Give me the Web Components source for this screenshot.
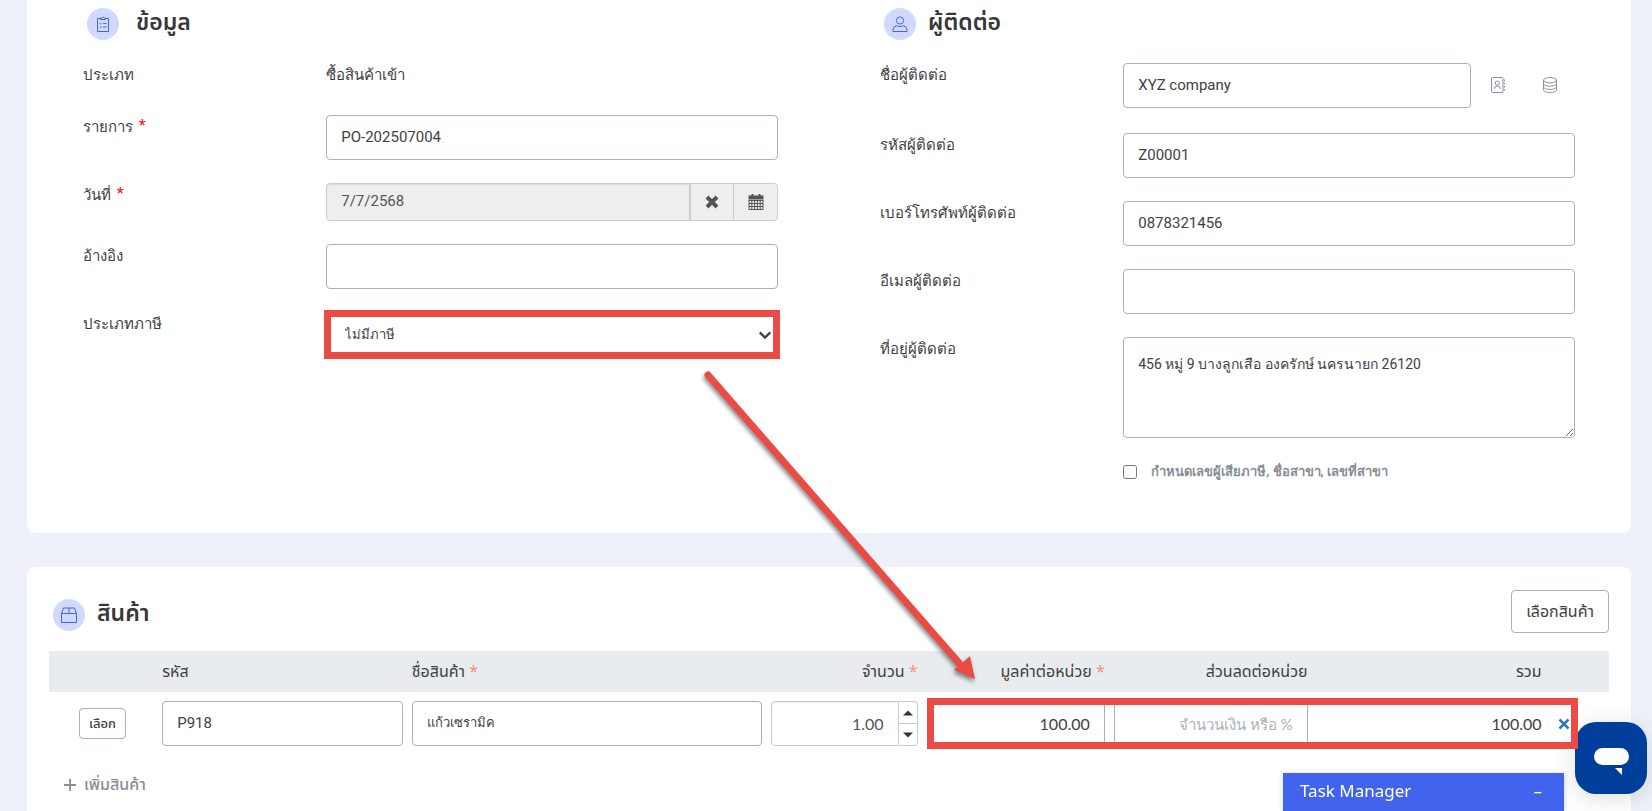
<!DOCTYPE html>
<html lang="th">
<head>
<meta charset="utf-8">
<title>ซื้อสินค้าเข้า</title>
<style>
    * { box-sizing: border-box; }
    body {
        --border: #a9b1bb;
        --ink: #414141;
        --muted: #868e96;
        --heading-font: "Noto Sans Thai", "Noto Sans", sans-serif;
        --number-font: Lato, "Noto Sans", sans-serif;
        margin: 0;
        padding: 0 21px 0 27px;
        min-height: 100vh;
        display: flex;
        flex-direction: column;
        gap: 34px;
        position: relative;
        overflow-x: hidden;
        background: #eef1fa;
        color: var(--ink);
        font: 15px/22px Roboto, "Noto Sans", sans-serif;
    }
</style>
</head>
<body>
<c-card>
    <c-columns>
        <c-section>
            <c-section-title icon="clipboard" wide>ข้อมูล</c-section-title>
            <c-static-field label="ประเภท">ซื้อสินค้าเข้า</c-static-field>
            <c-text-field label="รายการ" value="PO-202507004" required></c-text-field>
            <c-date-field label="วันที่" value="7/7/2568" required></c-date-field>
            <c-text-field label="อ้างอิง"></c-text-field>
            <c-select-field label="ประเภทภาษี" value="ไม่มีภาษี"></c-select-field>
        </c-section>
        <c-section>
            <c-section-title icon="person">ผู้ติดต่อ</c-section-title>
            <c-text-field label="ชื่อผู้ติดต่อ" value="XYZ company"><c-lookup slot="tools"></c-lookup></c-text-field>
            <c-text-field label="รหัสผู้ติดต่อ" value="Z00001"></c-text-field>
            <c-text-field label="เบอร์โทรศัพท์ผู้ติดต่อ" value="0878321456"></c-text-field>
            <c-text-field label="อีเมลผู้ติดต่อ"></c-text-field>
            <c-text-field label="ที่อยู่ผู้ติดต่อ" value="456 หมู่ 9 บางลูกเสือ องครักษ์ นครนายก 26120" multiline></c-text-field>
            <c-check-field label="กำหนดเลขผู้เสียภาษี, ชื่อสาขา, เลขที่สาขา"></c-check-field>
        </c-section>
    </c-columns>
</c-card>
<c-card last>
    <c-products></c-products>
</c-card>
<c-chat></c-chat>
<c-task-manager>Task Manager</c-task-manager>
<c-arrow></c-arrow>

<script>
const ICONS = {
    clipboard: `<path d="M5.5 2.5h-3v13h11v-13h-3M5.5 3.500V2h1.300a1.300 1.300 0 0 1 2.400 0h1.300v1.500z"/><path d="M4.500 7.500l.8.800 1.200-1.500M8 7.500h3.500M4.500 11l.8.800 1.200-1.500M8 11h3.500" stroke-width=".9"/>`,
    person: `<circle cx="8" cy="4.500" r="3.600"/><path d="M1 15.500v-2a4 4 0 0 1 3.500-3.700c1 .1 1.800.7 3.500.7s2.500-.6 3.500-.7a4 4 0 0 1 3.500 3.700v2z"/>`,
    box: `<path d="M.5 6.500h15v9H.5zM.5 6.500l2-5.500h11l2 5.500M8 1v5.500"/>`,
    contact: `<rect x="1.500" y=".5" width="11.500" height="15" rx="1"/><circle cx="7.300" cy="6" r="2"/><path d="M4.500 12v-.7a2 2 0 0 1 2-2h1.600a2 2 0 0 1 2 2v.7M14.500 2.500v2M14.500 6v1.500M14.500 9v1.500M14.500 12v1.500"/>`,
    database: `<ellipse cx="8" cy="3.200" rx="6.500" ry="2.700"/><path d="M1.500 3.200v9.600c0 1.500 2.900 2.700 6.500 2.700s6.500-1.200 6.500-2.700V3.200M1.500 6.500C1.500 8 4.400 9.200 8 9.200s6.500-1.200 6.500-2.700M1.500 9.700c0 1.500 2.900 2.700 6.500 2.700s6.500-1.200 6.500-2.700"/>`,
    cross: `<path d="M3 3l10 10M13 3L3 13" stroke-width="4"/>`,
    calendar: `<path d="M.5 1.500h3V0h2v1.500h5V0h2v1.500h3v4H.5z" fill="currentColor" stroke="none"/><path d="M1 6v9.500h14V6M1 6.500h14M1 9.500h14M1 12.500h14M3.800 6v9M6.600 6v9M9.400 6v9M12.200 6v9"/>`,
    chevron: `<path d="M2 5l6 6 6-6" stroke-width="2.500"/>`,
    remove: `<path d="M3.500 3.500l9 9M12.500 3.500l-9 9" stroke-width="2.500"/>`,
    plus: `<path d="M8 2v12M2 8h12" stroke-width="1.800"/>`,
    up: `<path d="M3 10.500l5-5 5 5z" fill="currentColor" stroke="none"/>`,
    down: `<path d="M3 5.500l5 5 5-5z" fill="currentColor" stroke="none"/>`
};

const icon = (name, size = 16) => `<svg width="${size}" height="${size}" viewBox="0 0 16 16" fill="none" stroke="currentColor" aria-hidden="true">${ICONS[name]}</svg>`;

const baseStyle = `
    * { box-sizing: border-box; }
    :host { display: block; }
    svg { display: block; }
    button { font: inherit; color: inherit; cursor: pointer; }
    input, select, textarea { font: inherit; color: inherit; margin: 0; }
`;

const controlStyle = `
    .control {
        display: block;
        width: 100%;
        min-width: 0;
        height: 45px;
        padding: 0 14px 2px;
        border: 1px solid var(--border);
        border-radius: 4px;
        background: #fff;
    }
`;

class BaseElement extends HTMLElement {
    constructor() {
        super();
        this.attachShadow({ mode: 'open' });
    }

    connectedCallback() {
        this.shadowRoot.innerHTML = `<style>${baseStyle}</style>${this.template()}`;
    }
}

class CardComponent extends BaseElement {
    template() {
        return `
        <style>
            :host { background: #fff; border-radius: 0 0 8px 8px; padding: 8px 56px 50px; }
            :host([last]) { flex: 1; border-radius: 8px 8px 0 0; padding: 23px 22px 0; }
        </style>
        <slot></slot>
        `;
    }
}

class ColumnsComponent extends BaseElement {
    template() {
        return `
        <style>
            :host { display: grid; grid-template-columns: 1fr 1fr; gap: 102px; align-items: start; }
        </style>
        <slot></slot>
        `;
    }
}

class SectionComponent extends BaseElement {
    template() {
        return `
        <style>
            :host { display: flex; flex-direction: column; gap: 23px; }
        </style>
        <slot></slot>
        `;
    }
}

class SectionTitleComponent extends BaseElement {
    template() {
        return `
        <style>
            :host { display: flex; gap: 12px; padding-left: 4px; }
            :host([wide]) { gap: 17px; }
            .badge {
                display: grid;
                place-items: center;
                width: 32px;
                height: 32px;
                border-radius: 50%;
                background: #d0d9ff;
                color: #4263eb;
            }
            h2 { margin: 0; font: 600 23px/30px var(--heading-font); color: #373737; }
        </style>
        <span class="badge">${icon(this.getAttribute('icon'))}</span>
        <h2><slot></slot></h2>
        `;
    }
}

// Base of every label + control row
class FieldComponent extends BaseElement {
    get value() {
        return this.getAttribute('value') || '';
    }

    control() {
        return '<slot></slot>';
    }

    template() {
        const star = this.hasAttribute('required') ? ' <span class="star">*</span>' : '';
        return `
        <style>
            ${controlStyle}
            :host { display: grid; grid-template-columns: 35% 65%; align-items: start; }
            label { line-height: 24px; }
            .star { color: #f00; font: 18px/16px "Liberation Sans", sans-serif; margin-left: 2px; }
        </style>
        <label for="control">${this.getAttribute('label')}${star}</label>
        ${this.control()}
        `;
    }
}

class StaticFieldComponent extends FieldComponent {
    control() {
        return `
        <style>output { min-height: 29px; line-height: 24px; }</style>
        <output id="control"><slot></slot></output>
        `;
    }
}

class TextFieldComponent extends FieldComponent {
    control() {
        if (this.hasAttribute('multiline')) {
            return `
            <style>textarea.control { height: 101px; padding: 15px 14px; font-size: 14px; resize: both; }</style>
            <textarea id="control" class="control">${this.value}</textarea>
            `;
        }
        return `
        <style>
            .line { display: flex; }
            .line ::slotted(*) { flex: none; margin-bottom: 2px; }
        </style>
        <div class="line">
            <input id="control" class="control" type="text" value="${this.value}">
            <slot name="tools"></slot>
        </div>
        `;
    }
}

class DateFieldComponent extends FieldComponent {
    control() {
        return `
        <style>
            .group { display: flex; height: 38px; border: 1px solid #ccc; border-radius: 4px; background: #eee; color: #555; overflow: hidden; }
            .group input { flex: 1; min-width: 0; border: 0; padding: 0 14px 3px; background: none; box-shadow: inset 0 1px 1px rgba(0, 0, 0, .08); }
            .group button { display: grid; place-items: center; width: 44px; border: 0; border-left: 1px solid #ccc; background: none; }
            .group button:first-of-type { border-left-width: 2px; }
        </style>
        <div class="group">
            <input id="control" type="text" value="${this.value}" readonly>
            <button type="button" aria-label="ล้าง">${icon('cross')}</button>
            <button type="button" aria-label="ปฏิทิน">${icon('calendar')}</button>
        </div>
        `;
    }
}

class SelectFieldComponent extends FieldComponent {
    control() {
        return `
        <style>
            .picker { display: grid; align-items: center; position: relative; }
            .picker > * { grid-area: 1 / 1; }
            .picker svg { justify-self: end; margin-right: 6px; pointer-events: none; }
            select.control { appearance: none; padding: 0 18px; font-size: 13px; }
            .highlight { position: absolute; inset: -2px; border: 7px solid #ea4b44; pointer-events: none; }
        </style>
        <div class="picker">
            <select id="control" class="control"><option>${this.value}</option></select>
            ${icon('chevron', 14)}
            <span class="highlight"></span>
        </div>
        `;
    }
}

class CheckFieldComponent extends BaseElement {
    template() {
        return `
        <style>
            :host { margin-left: 35%; }
            label { display: flex; align-items: center; gap: 14px; color: var(--muted); font-size: 13px; font-weight: 600; }
            input { width: 14px; height: 14px; }
        </style>
        <label><input type="checkbox">${this.getAttribute('label')}</label>
        `;
    }
}

class LookupComponent extends BaseElement {
    template() {
        return `
        <style>
            :host { display: flex; width: 104px; height: 43px; align-items: center; gap: 36px; padding-left: 19px; color: var(--muted); }
            button { border: 0; padding: 0; background: none; }
        </style>
        <button type="button" aria-label="สมุดรายชื่อ">${icon('contact')}</button>
        <button type="button" aria-label="ฐานข้อมูล">${icon('database')}</button>
        `;
    }

    connectedCallback() {
        super.connectedCallback();
        this.parentElement.style.marginBottom = '2px';
    }
}

class ProductsComponent extends BaseElement {
    template() {
        return `
        <style>
            ${controlStyle}
            header { display: flex; justify-content: space-between; align-items: flex-end; margin-bottom: 18px; font-family: var(--heading-font); }
            header c-section-title { padding-bottom: 2px; }
            .choose { height: 43px; padding: 0 14px; border: 1px solid var(--border); border-radius: 4px; background: #fff; font-size: 16px; }
            .lines { position: relative; }
            table { width: 100%; table-layout: fixed; border-collapse: collapse; }
            th { height: 41px; padding: 0 5px 0 4px; background: #e8ecef; font: 16px/22px var(--heading-font); text-align: left; }
            td { padding: 9px 5px 9px 4px; }
            .num { text-align: right; }
            .star { color: #ff8787; }
            .small { display: block; height: 31px; margin-left: 26px; padding: 0 9px; border: 1px solid var(--border); border-radius: 4px; background: #fff; font: 500 13px/22px var(--heading-font); }
            .name { font-size: 13px; }
            .amount { font: 16px/22px var(--number-font); text-align: right; padding: 0 14px; }
            .amount::placeholder { color: #a9b1bb; opacity: 1; font-size: 15px; }
            .spin { display: grid; grid-template-columns: 1fr 19px; color: #555; }
            .spin .amount { grid-row: 1 / 3; border-color: #ccc; border-radius: 4px 0 0 4px; box-shadow: inset 0 1px 1px rgba(0, 0, 0, .08); }
            .spin button { display: grid; place-items: center; padding: 0; border: 1px solid #ccc; border-left: 0; background: #fff; color: #333; }
            .spin button:first-of-type { border-radius: 0 4px 0 0; border-bottom: 0; }
            .spin button:last-of-type { border-radius: 0 0 4px 0; }
            td.total { font: 16px/22px var(--number-font); text-align: right; }
            .remove { display: block; border: 0; padding: 0; background: none; color: #337ab7; margin-left: 5px; }
            .highlight { position: absolute; z-index: 2; top: 47px; left: calc(56% + 4px); right: 2%; height: 51px; border: 7px solid #ea4b44; pointer-events: none; }
            .add { display: inline-flex; align-items: center; gap: 6px; margin: 18px 0 0 13px; color: var(--muted); font: 500 16px/24px var(--heading-font); text-decoration: none; }
        </style>
        <header>
            <c-section-title icon="box">สินค้า</c-section-title>
            <button type="button" class="choose">เลือกสินค้า</button>
        </header>
        <div class="lines">
            <table>
                <colgroup>
                    <col style="width: 7%"><col style="width: 16%"><col style="width: 23%"><col style="width: 10%">
                    <col style="width: 12%"><col style="width: 13%"><col style="width: 15%"><col style="width: 4%">
                </colgroup>
                <thead>
                    <tr>
                        <th></th>
                        <th id="code">รหัส</th>
                        <th id="name">ชื่อสินค้า <span class="star">*</span></th>
                        <th id="qty" class="num">จำนวน <span class="star">*</span></th>
                        <th id="price" class="num">มูลค่าต่อหน่วย <span class="star">*</span></th>
                        <th id="discount" class="num">ส่วนลดต่อหน่วย</th>
                        <th class="num">รวม</th>
                        <th></th>
                    </tr>
                </thead>
                <tbody>
                    <tr>
                        <td><button type="button" class="small">เลือก</button></td>
                        <td><input class="control" type="text" aria-labelledby="code" value="P918"></td>
                        <td><input class="control name" type="text" aria-labelledby="name" value="แก้วเซรามิค"></td>
                        <td>
                            <div class="spin">
                                <input class="control amount" type="text" inputmode="decimal" aria-labelledby="qty" value="1.00">
                                <button type="button" aria-label="เพิ่ม">${icon('up')}</button>
                                <button type="button" aria-label="ลด">${icon('down')}</button>
                            </div>
                        </td>
                        <td><input class="control amount" type="text" inputmode="decimal" aria-labelledby="price" value="100.00"></td>
                        <td><input class="control amount" type="text" aria-labelledby="discount" placeholder="จำนวนเงิน หรือ %"></td>
                        <td class="total">100.00</td>
                        <td><button type="button" class="remove" aria-label="ลบ">${icon('remove')}</button></td>
                    </tr>
                </tbody>
            </table>
            <span class="highlight"></span>
        </div>
        <a class="add" href="#">${icon('plus')}เพิ่มสินค้า</a>
        `;
    }
}

class TaskManagerComponent extends BaseElement {
    template() {
        return `
        <style>
            :host { position: fixed; right: 88px; bottom: 0; width: 281px; }
            button {
                display: flex;
                justify-content: space-between;
                width: 100%;
                padding: 7px 22px 7px 17px;
                border: 0;
                background: #4263eb;
                color: #fff;
                font: 17px/24px var(--heading-font);
                box-shadow: 0 1px 5px rgba(0, 0, 0, .2);
            }
        </style>
        <button type="button"><slot></slot><span>–</span></button>
        `;
    }
}

class ChatComponent extends BaseElement {
    template() {
        return `
        <style>
            :host { position: fixed; right: 5px; bottom: 17px; }
            button {
                display: block;
                width: 72px;
                height: 72px;
                padding: 0;
                border: 0;
                border-radius: 21px;
                background: #003e9c;
                box-shadow: 0 4px 24px rgba(30, 60, 50, .16);
            }
        </style>
        <button type="button" aria-label="แชท">
            <svg width="72" height="72" viewBox="0 0 72 72" fill="#fff">
                <rect x="19" y="26" width="35" height="17" rx="8.500"/>
                <path d="M40 46h7v7z"/>
            </svg>
        </button>
        `;
    }
}

// Callout arrow from the tax type down to the price columns
class ArrowComponent extends BaseElement {
    template() {
        return `
        <style>
            :host { position: absolute; z-index: 3; left: 700px; top: 366px; pointer-events: none; }
            svg { filter: drop-shadow(-1px 3px 2px rgba(0, 0, 0, .45)); }
        </style>
        <svg width="290" height="330" viewBox="0 0 290 330" fill="#ea4b44">
            <path d="M8 9L260 298" stroke="#ea4b44" stroke-width="7" stroke-linecap="round"/>
            <path d="M275 313L270 290L254 304z"/>
        </svg>
        `;
    }
}

customElements.define('c-card', CardComponent);
customElements.define('c-columns', ColumnsComponent);
customElements.define('c-section', SectionComponent);
customElements.define('c-section-title', SectionTitleComponent);
customElements.define('c-static-field', StaticFieldComponent);
customElements.define('c-text-field', TextFieldComponent);
customElements.define('c-date-field', DateFieldComponent);
customElements.define('c-select-field', SelectFieldComponent);
customElements.define('c-check-field', CheckFieldComponent);
customElements.define('c-lookup', LookupComponent);
customElements.define('c-products', ProductsComponent);
customElements.define('c-task-manager', TaskManagerComponent);
customElements.define('c-chat', ChatComponent);
customElements.define('c-arrow', ArrowComponent);
</script>
</body>
</html>
